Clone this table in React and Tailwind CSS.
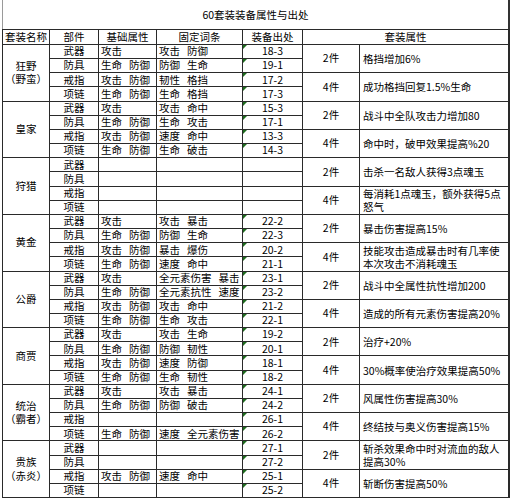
const sets = [
  {
    name: ["狂野", "（野蛮）"],
    parts: [
      ["攻击", "攻击 防御", "18-3"],
      ["生命 防御", "防御 生命", "19-1"],
      ["攻击 防御", "韧性 格挡", "17-2"],
      ["生命 防御", "生命 格挡", "17-3"],
    ],
    two: ["格挡增加6%"],
    four: ["成功格挡回复1.5%生命"],
  },
  {
    name: ["皇家"],
    parts: [
      ["攻击", "攻击 命中", "15-3"],
      ["生命 防御", "生命 攻击", "17-1"],
      ["攻击 防御", "速度 命中", "13-3"],
      ["生命 防御", "生命 破击", "14-3"],
    ],
    two: ["战斗中全队攻击力增加80"],
    four: ["命中时，破甲效果提高%20"],
  },
  {
    name: ["狩猎"],
    parts: [
      ["", "", ""],
      ["", "", ""],
      ["", "", ""],
      ["", "", ""],
    ],
    two: ["击杀一名敌人获得3点魂玉"],
    four: ["每消耗1点魂玉，额外获得5点", "怒气"],
  },
  {
    name: ["黄金"],
    parts: [
      ["攻击", "攻击 暴击", "22-2"],
      ["生命 防御", "防御 生命", "22-3"],
      ["攻击 防御", "暴击 爆伤", "20-2"],
      ["生命 防御", "速度 命中", "21-1"],
    ],
    two: ["暴击伤害提高15%"],
    four: ["技能攻击造成暴击时有几率使", "本次攻击不消耗魂玉"],
  },
  {
    name: ["公爵"],
    parts: [
      ["攻击", "全元素伤害 暴击", "23-1"],
      ["生命 防御", "全元素抗性 速度", "23-2"],
      ["攻击 防御", "攻击 命中", "21-2"],
      ["生命 防御", "生命 攻击", "22-1"],
    ],
    two: ["战斗中全属性抗性增加200"],
    four: ["造成的所有元素伤害提高20%"],
  },
  {
    name: ["商贾"],
    parts: [
      ["攻击", "攻击 生命", "19-2"],
      ["生命 防御", "防御 韧性", "20-1"],
      ["攻击 防御", "速度 防御", "18-1"],
      ["生命 防御", "生命 韧性", "18-2"],
    ],
    two: ["治疗+20%"],
    four: ["30%概率使治疗效果提高50%"],
  },
  {
    name: ["统治", "（霸者）"],
    parts: [
      ["攻击", "攻击 暴击", "24-1"],
      ["生命 防御", "防御 破击", "24-2"],
      ["", "", "26-1"],
      ["生命 防御", "速度 全元素伤害", "26-2"],
    ],
    two: ["风属性伤害提高30%"],
    four: ["终结技与奥义伤害提高15%"],
  },
  {
    name: ["贵族", "（赤炎）"],
    parts: [
      ["", "", "27-1"],
      ["", "", "27-2"],
      ["攻击 防御", "速度 命中", "25-1"],
      ["", "", "25-2"],
    ],
    two: ["斩杀效果命中时对流血的敌人", "提高30%"],
    four: ["斩断伤害提高50%"],
  },
]

const slots = ["武器", "防具", "戒指", "项链"]

const Words = ({ text }) => (
  <div className="flex gap-[7px]">
    {text.split(" ").map((w, i) => (
      <span key={i}>{w}</span>
    ))}
  </div>
)

const Lines = ({ lines }) => (
  <div className="leading-[13px]">
    {lines.map((l, i) => (
      <div key={i}>{l}</div>
    ))}
  </div>
)

const cell = "flex items-center bg-white"

export default function App() {
  return (
    <div
      className="w-[511px] h-[500px] bg-white text-[10.5px] text-black leading-none"
      style={{ fontFamily: '"Noto Sans CJK SC", "Noto Sans", sans-serif' }}
    >
      <div className="ml-[2px] w-[508px] h-[29px] border-l border-l-[#9a9a9a] border-r-2 border-r-[#333] flex items-center justify-center pt-px">
        60套装装备属性与出处
      </div>
      <div className="ml-[2px] w-[508px] h-[469px] bg-[#2a2a2a] pt-px pb-px pl-px pr-[2px] grid gap-px grid-cols-[46px_48px_57px_85px_59px_56px_minmax(0,1fr)] grid-rows-[14px_repeat(32,minmax(0,1fr))]">
        <div className={`${cell} justify-center`}>套装名称</div>
        <div className={`${cell} justify-center`}>部件</div>
        <div className={`${cell} justify-center`}>基础属性</div>
        <div className={`${cell} justify-center`}>固定词条</div>
        <div className={`${cell} justify-center`}>装备出处</div>
        <div className={`${cell} justify-center col-span-2`}>套装属性</div>
        {sets.map((s, si) =>
          s.parts.map((p, pi) => (
            <Row key={`${si}-${pi}`} set={s} part={p} index={pi} />
          ))
        )}
      </div>
    </div>
  )
}

const Row = ({ set, part, index }) => {
  const [base, fixed, source] = part
  return (
    <>
      {index === 0 && (
        <div className={`${cell} row-span-4 flex-col justify-center gap-[3px]`}>
          {set.name.map((n, i) => (
            <span key={i}>{n}</span>
          ))}
        </div>
      )}
      <div className={`${cell} justify-center`}>{slots[index]}</div>
      <div className={`${cell} pl-[2px]`}>
        {base && <Words text={base} />}
      </div>
      <div className={`${cell} pl-[2px]`}>
        {fixed && <Words text={fixed} />}
      </div>
      <div className={`${cell} justify-center relative`}>
        {source && (
          <span className="absolute left-0 top-0 w-0 h-0 border-t-[4px] border-t-[#1d6b1d] border-r-[4px] border-r-transparent" />
        )}
        {source}
      </div>
      {index % 2 === 0 && (
        <>
          <div className={`${cell} row-span-2 justify-center`}>
            {index === 0 ? "2件" : "4件"}
          </div>
          <div className={`${cell} row-span-2 pl-[3px]`}>
            <Lines lines={index === 0 ? set.two : set.four} />
          </div>
        </>
      )}
    </>
  )
}
